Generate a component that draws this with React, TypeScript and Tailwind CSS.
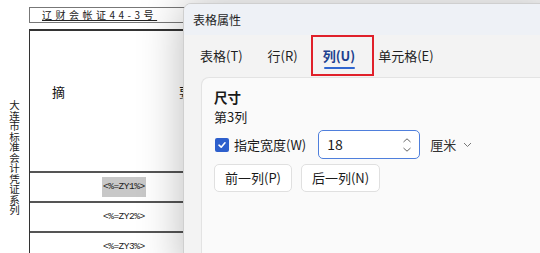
import React from "react";

const cjk = { fontFamily: '"Noto Sans CJK SC", "Noto Sans", sans-serif' };
const mono = { fontFamily: '"Liberation Mono", "Noto Sans CJK SC", monospace' };

export default function App() {
  return (
    <div className="relative w-[540px] h-[253px] bg-white overflow-hidden" style={cjk}>
      {/* document */}
      <div className="flex">
        <div className="w-[29px] flex justify-center pt-[100px]">
          <span className="text-[10.5px] leading-[11px] text-[#222] [writing-mode:vertical-rl]">
            大连市标准会计凭证系列
          </span>
        </div>
        <div className="flex flex-col w-[240px]">
          <div className="mt-[7px] h-[16px] border-t border-b border-l border-[#777] flex items-center pl-[12px]">
            <span className="text-[10px] leading-[12px] underline tracking-[3.5px] text-[#222]">辽财会帐证44-3号</span>
          </div>
          <div className="mt-[6px] border-l border-t-2 border-[#333] flex flex-col">
            <div className="h-[140px] flex items-center pl-[22px] pb-[18px] gap-[114px] text-[13px] text-[#111]">
              <span>摘</span>
              <span>要</span>
            </div>
            <div className="h-[30px] border-t-2 border-[#555] flex items-center pl-[72px]">
              <span className="text-[9.5px] leading-[20px] tracking-[-0.5px] px-[1px] bg-[#c8c8c8] text-[#222]" style={mono}>&lt;%=ZY1%&gt;</span>
            </div>
            <div className="h-[30px] border-t-2 border-[#555] flex items-center pl-[72px]">
              <span className="text-[9.5px] leading-[20px] tracking-[-0.5px] px-[1px] text-[#222]" style={mono}>&lt;%=ZY2%&gt;</span>
            </div>
            <div className="h-[30px] border-t-2 border-[#555] flex items-center pl-[72px]">
              <span className="text-[9.5px] leading-[20px] tracking-[-0.5px] px-[1px] text-[#222]" style={mono}>&lt;%=ZY3%&gt;</span>
            </div>
          </div>
        </div>
      </div>

      {/* dialog */}
      <div className="absolute left-[183px] top-[3px] w-[380px] h-[270px] rounded-tl-[8px] border border-[#cfcfcf] bg-[#f3f3f3] shadow-[0_0_45px_rgba(0,0,0,0.28)] flex flex-col overflow-hidden">
        <div className="h-[31px] bg-[#eef1f6] flex items-center pl-[9px] text-[12px] text-[#1f1f1f]">表格属性</div>
        <div className="h-[42px] flex items-center pl-[16px] gap-[25px] text-[13px] text-[#1f1f1f]">
          <span>表格(T)</span>
          <span>行(R)</span>
          <span className="relative font-semibold text-[#1c3f8f] mr-[-2px]">
            列(U)
            <span className="absolute left-[1px] right-0 top-[21px] h-[2px] rounded bg-[#2f66d0]" />
          </span>
          <span>单元格(E)</span>
        </div>
        <div className="ml-[17px] flex-1 bg-[#fafafa] border-l border-t border-[#e3e3e3] rounded-tl-[8px] pl-[12px] pt-[9px] flex flex-col text-[13px] text-[#1a1a1a]">
          <div className="font-bold text-[13.5px] leading-[20px]">尺寸</div>
          <div className="leading-[20px]">第3列</div>
          <div className="flex items-center mt-[3px] h-[29px]">
            <span className="w-[14px] h-[14px] ml-[1px] rounded-[2px] bg-[#2d5fcc] flex items-center justify-center">
              <svg width="10" height="10" viewBox="0 0 10 10"><path d="M2 5.2 L4.2 7.2 L8 2.8" stroke="white" strokeWidth="1.6" fill="none" strokeLinecap="round" strokeLinejoin="round" /></svg>
            </span>
            <span className="ml-[5px]">指定宽度(W)</span>
            <div className="ml-[12px] w-[102px] h-[29px] rounded-[5px] border border-[#4f7fdc] bg-white flex items-center pl-[8px] pr-[7px]">
              <span className="flex-1 text-[14px]">18</span>
              <svg width="10" height="16" viewBox="0 0 10 16"><path d="M1.5 5 L5 1.8 L8.5 5" stroke="#666" strokeWidth="1" fill="none" /><path d="M1.5 11 L5 14.2 L8.5 11" stroke="#666" strokeWidth="1" fill="none" /></svg>
            </div>
            <span className="ml-[10px] text-[#333]">厘米</span>
            <svg className="ml-[7px]" width="9" height="6" viewBox="0 0 9 6"><path d="M1 1 L4.5 4.5 L8 1" stroke="#777" strokeWidth="1" fill="none" /></svg>
          </div>
          <div className="flex gap-[9px] mt-[5px]">
            <div className="w-[78px] h-[28px] rounded-[5px] border border-[#e0e0e0] bg-white flex items-center justify-center text-[13px]">前一列(P)</div>
            <div className="w-[79px] h-[28px] rounded-[5px] border border-[#e0e0e0] bg-white flex items-center justify-center text-[13px]">后一列(N)</div>
          </div>
        </div>
      </div>

      {/* annotation */}
      <div className="absolute left-[311px] top-[35px] w-[63px] h-[41px] border-2 border-[#e0202a]" />
    </div>
  );
}
